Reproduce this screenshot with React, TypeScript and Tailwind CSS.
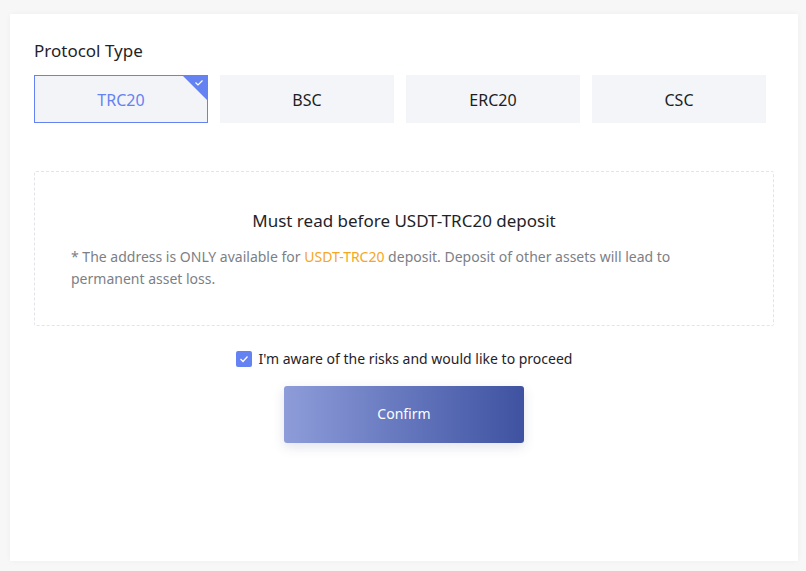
import React from "react";

const options = ["TRC20", "BSC", "ERC20", "CSC"];

export default function App() {
  return (
    <div
      className="w-[806px] h-[571px] bg-[#f7f7f8] pt-[14px] pl-[10px] overflow-hidden"
      style={{ fontFamily: '"Noto Sans", "Open Sans", sans-serif' }}
    >
      <div className="w-[788px] h-[547px] bg-white shadow-[0_0_6px_rgba(0,0,0,0.04)] px-6 pt-[26px]">
        <div className="text-[17px] leading-[22px] text-[#1f2329]">Protocol Type</div>
        <div className="flex gap-3 mt-[13px]">
          {options.map((o, i) => (
            <div
              key={o}
              className={
                i === 0
                  ? "relative w-[174px] h-[48px] flex items-center justify-center pt-[2px] bg-[#f3f4f8] border border-[#6582f2] text-[#6582f2] text-[16px] overflow-hidden"
                  : "relative w-[174px] h-[48px] flex items-center justify-center pt-[2px] bg-[#f4f5f9] text-[#1b1e24] text-[16px]"
              }
            >
              {o}
              {i === 0 && (
                <svg className="absolute top-0 right-0" width="24" height="24" viewBox="0 0 24 24">
                  <polygon points="0,0 24,0 24,24" fill="#6582f2" />
                  <path d="M12.5 6.5 L15 9 L19.5 4.5" stroke="#fff" strokeWidth="1.2" fill="none" />
                </svg>
              )}
            </div>
          ))}
        </div>
        <div className="mt-[48px] border border-dashed border-[#e2e4ea] rounded-[2px] h-[155px] px-[36px] pt-[37px]">
          <div className="text-center text-[17px] leading-[24px] text-[#1f2329]">
            Must read before USDT-TRC20 deposit
          </div>
          <div className="mt-[13px] text-[14px] leading-[22px] text-[#7c7f86]">
            * The address is ONLY available for <span className="text-[#f5a623]">USDT-TRC20</span> deposit. Deposit of other assets will lead to permanent asset loss.
          </div>
        </div>
        <div className="mt-[23px] flex items-center justify-center gap-[7px]">
          <div className="w-4 h-4 rounded-[2px] bg-[#6582f2] flex items-center justify-center">
            <svg width="12" height="12" viewBox="0 0 12 12">
              <path d="M2.5 6 L5 8.5 L9.5 3.5" stroke="#fff" strokeWidth="1.3" fill="none" />
            </svg>
          </div>
          <span className="text-[14px] leading-[20px] text-[#1f2329]">I'm aware of the risks and would like to proceed</span>
        </div>
        <div className="flex justify-center mt-[17px]">
          <button className="w-[240px] h-[57px] pb-[2px] rounded-[3px] bg-gradient-to-r from-[#8e9cd9] to-[#3f52a1] text-white text-[14px] shadow-[0_4px_12px_rgba(60,70,120,0.15)]">
            Confirm
          </button>
        </div>
      </div>
    </div>
  );
}
